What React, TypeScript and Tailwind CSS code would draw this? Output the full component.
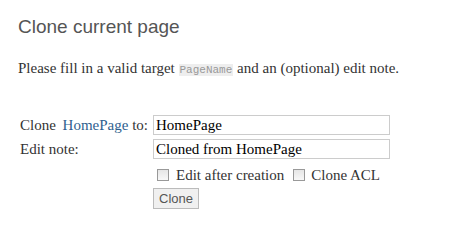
export default function App() {
  const serif = "font-['Liberation_Serif',serif]";
  return (
    <div className={`w-[472px] h-[241px] bg-white text-[#333] ${serif}`}>
      <div className="px-[18px] pt-[16px]">
        <h1 className="font-['Liberation_Sans',Arial,sans-serif] text-[19px] leading-[22px] text-[#555]">
          Clone current page
        </h1>
        <p className="mt-[20px] text-[15px] leading-[20px]">
          Please fill in a valid target{" "}
          <code className="bg-[#eee] px-[1px] font-['Liberation_Mono',monospace] text-[11px] text-[#999]">
            PageName
          </code>{" "}
          and an (optional) edit note.
        </p>
        <table className="mt-[35px] ml-[2px] border-separate border-spacing-0 text-[15px]">
          <tbody>
            <tr>
              <td className="w-[133px] pb-[4px] align-middle leading-[20px]">
                Clone <span className="ml-[3px] text-[#2f5f8f]">HomePage</span> to:
              </td>
              <td className="pb-[4px]">
                <input
                  readOnly
                  value="HomePage"
                  className="block h-[20px] w-[237px] border border-[#ccc] px-[2px] text-[15px] leading-[18px] text-black outline-none"
                />
              </td>
            </tr>
            <tr>
              <td className="pb-[8px] align-top leading-[20px]">Edit note:</td>
              <td className="pb-[8px]">
                <input
                  readOnly
                  value="Cloned from HomePage"
                  className="block h-[20px] w-[237px] border border-[#ccc] px-[2px] text-[15px] leading-[18px] text-black outline-none"
                />
              </td>
            </tr>
            <tr>
              <td />
              <td className="pb-[5px]">
                <div className="flex items-center pl-[4px] leading-[16px]">
                  <span className="inline-block h-[12px] w-[12px] border border-[#999] bg-gradient-to-b from-[#e6e6e6] to-[#f8f8f8]" />
                  <span className="ml-[7px]">Edit after creation</span>
                  <span className="ml-[9px] inline-block h-[12px] w-[12px] border border-[#999] bg-gradient-to-b from-[#e6e6e6] to-[#f8f8f8]" />
                  <span className="ml-[6px]">Clone ACL</span>
                </div>
              </td>
            </tr>
            <tr>
              <td />
              <td>
                <button className="block h-[21px] w-[46px] border border-[#bbb] bg-[#f0f0f0] font-['Liberation_Sans',Arial,sans-serif] text-[13px] leading-[19px] text-[#555]">
                  Clone
                </button>
              </td>
            </tr>
          </tbody>
        </table>
      </div>
    </div>
  );
}
